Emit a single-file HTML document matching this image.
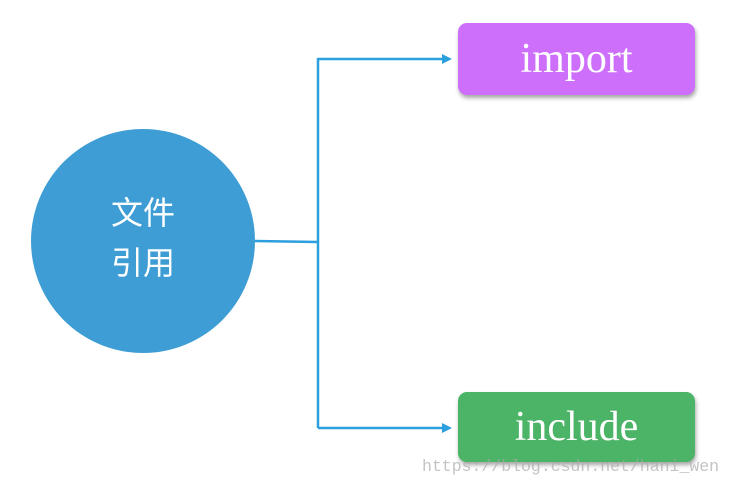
<html><head><style>
body{margin:0;width:733px;height:488px;background:#fff;position:relative;overflow:hidden;font-family:"Liberation Serif",serif}
.b{position:absolute;left:458px;width:237px;border-radius:9px;color:#fff;font-size:42px;text-align:center;box-shadow:1px 3px 4px rgba(0,0,0,.35)}
</style></head><body>
<svg width="733" height="488" style="position:absolute;left:0;top:0">
<circle cx="143" cy="241" r="112" fill="#3e9dd4"/>
<path d="M255 241 L318 242 M318 58 V428 M318 59 H444 M318 428 H444" stroke="#2c9fde" stroke-width="2.5" fill="none"/>
<path d="M452 59 L442 54 L442 64Z M452 428 L442 423 L442 433Z" fill="#2c9fde"/>
<text x="143" y="224" fill="#fff" font-size="32" text-anchor="middle" font-family="Noto Sans CJK SC,sans-serif">文件</text>
<text x="143" y="274" fill="#fff" font-size="32" text-anchor="middle" font-family="Noto Sans CJK SC,sans-serif">引用</text>
</svg>
<div class="b" style="top:23px;height:72px;line-height:72px;background:#cd6ffb">import</div>
<div class="b" style="top:392px;height:70px;line-height:70px;background:#4bb466">include</div>
<div style="position:absolute;left:422px;top:457px;font:16.5px 'Liberation Mono',monospace;color:rgba(170,170,170,.7)">https://blog.csdn.net/hani_wen</div>
</body></html>
